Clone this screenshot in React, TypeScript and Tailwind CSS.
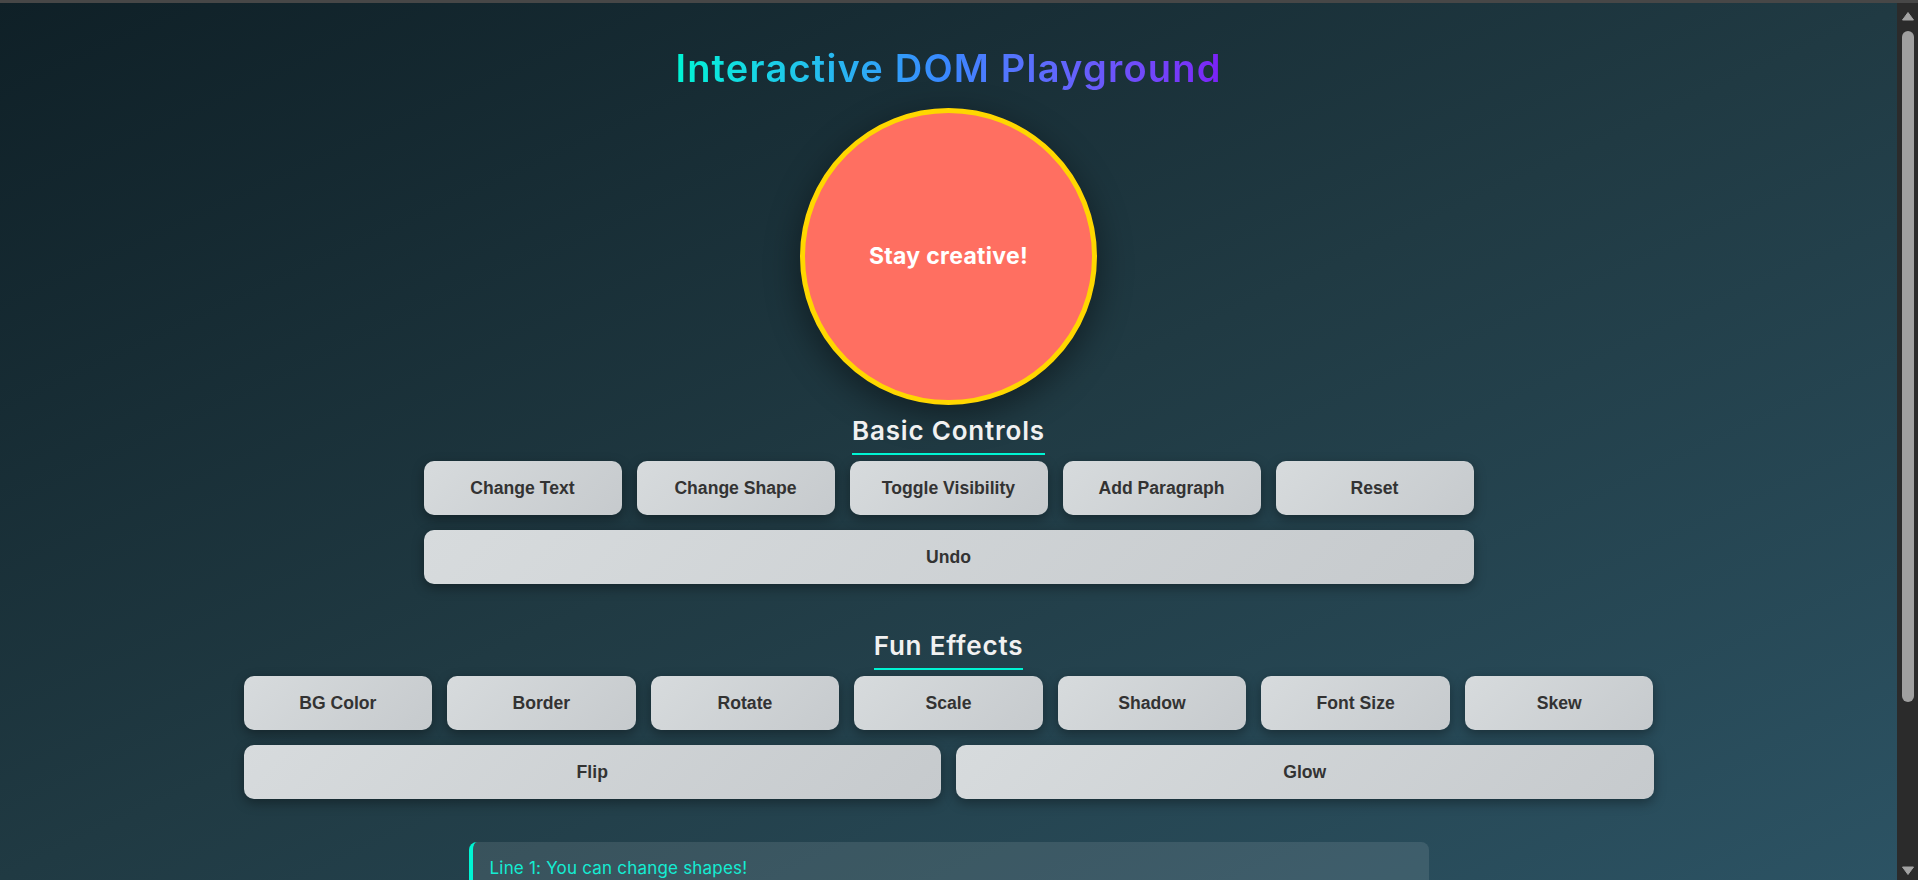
const basicControls = ['Change Text', 'Change Shape', 'Toggle Visibility', 'Add Paragraph', 'Reset']
const funEffects = ['BG Color', 'Border', 'Rotate', 'Scale', 'Shadow', 'Font Size', 'Skew']

function ControlButton({ label }: { label: string }) {
  return (
    <button className="h-[54px] rounded-[10px] bg-linear-135 from-[#d7dbdd] to-[#c6cacd] font-[family-name:'Liberation_Sans',Arial,sans-serif] text-[17.6px] font-bold text-[#333] shadow-[0_4px_12px_rgba(0,0,0,0.35)]">
      {label}
    </button>
  )
}

function SectionTitle({ children }: { children: string }) {
  return (
    <h2 className="border-b-2 border-[#00f5d4] pb-[8px] text-[26px] leading-[29px] font-semibold tracking-[0.8px] text-[#f1f1f1]">
      {children}
    </h2>
  )
}

// 브라우저 스크롤바 (스크린샷에 포함됨)
function FakeScrollbar() {
  return (
    <aside className="flex h-[877px] w-[21px] shrink-0 flex-col items-center bg-[#2b2b2b]">
      <svg width="14" height="10" viewBox="0 0 14 10" className="mt-[8px]">
        <path d="M7 1.5 L12.5 9 L1.5 9 Z" fill="#a3a3a3" stroke="#a3a3a3" strokeWidth="1" strokeLinejoin="round" />
      </svg>
      <div className="mt-[10px] h-[671px] w-[12px] rounded-full bg-[#a0a0a0]" />
      <div className="flex-1" />
      <svg width="14" height="10" viewBox="0 0 14 10" className="mb-[4px]">
        <path d="M1.5 1 L12.5 1 L7 8.5 Z" fill="#a3a3a3" stroke="#a3a3a3" strokeWidth="1" strokeLinejoin="round" />
      </svg>
    </aside>
  )
}

export default function App() {
  return (
    <div className="flex min-h-screen flex-col bg-linear-to-br from-[#0f2027] via-[#203a43] to-[#2c5364] bg-fixed font-[family-name:'Inter','Noto_Sans',sans-serif]">
      <div className="h-[3px] bg-[#474747]" />

      <div className="flex items-start">
        <main className="flex min-h-[1870px] flex-1 flex-col items-center pt-[43px]">
          {/* 제목 */}
          <h1 className="bg-linear-to-r from-[#00f5d4] via-[#3a86ff] to-[#7b1ff7] bg-clip-text text-[38px] leading-[44px] font-semibold tracking-[1.2px] text-transparent">
            Interactive DOM Playground
          </h1>

          {/* 원형 박스 */}
          <div className="mt-[18px] flex h-[297px] w-[297px] items-center justify-center rounded-full border-[5px] border-[#ffd700] bg-[#ff6f61] shadow-[0_10px_35px_rgba(0,0,0,0.45)]">
            <span className="text-[23px] font-bold tracking-[0.3px] text-white">Stay creative!</span>
          </div>

          {/* 기본 컨트롤 */}
          <div className="mt-[11px]">
            <SectionTitle>Basic Controls</SectionTitle>
          </div>
          <div className="mt-[6px] grid w-[1050px] grid-cols-5 gap-[15px]">
            {basicControls.map(label => (
              <ControlButton key={label} label={label} />
            ))}
            <div className="col-span-5 grid">
              <ControlButton label="Undo" />
            </div>
          </div>

          {/* 재미 효과 */}
          <div className="mt-[47px]">
            <SectionTitle>Fun Effects</SectionTitle>
          </div>
          <div className="mt-[6px] flex w-[1410px] flex-col gap-[15px]">
            <div className="grid grid-cols-7 gap-[15px]">
              {funEffects.map(label => (
                <ControlButton key={label} label={label} />
              ))}
            </div>
            <div className="grid grid-cols-2 gap-[15px]">
              <ControlButton label="Flip" />
              <ControlButton label="Glow" />
            </div>
          </div>

          {/* 문단 목록 */}
          <div className="mt-[43px] w-[960px] rounded-lg border-l-4 border-[#00f5d4] bg-white/10 px-[17px] py-[14px]">
            <p className="text-[17px] leading-[24px] tracking-[0.2px] text-[#14ecd3]">Line 1: You can change shapes!</p>
          </div>
        </main>

        <FakeScrollbar />
      </div>
    </div>
  )
}
